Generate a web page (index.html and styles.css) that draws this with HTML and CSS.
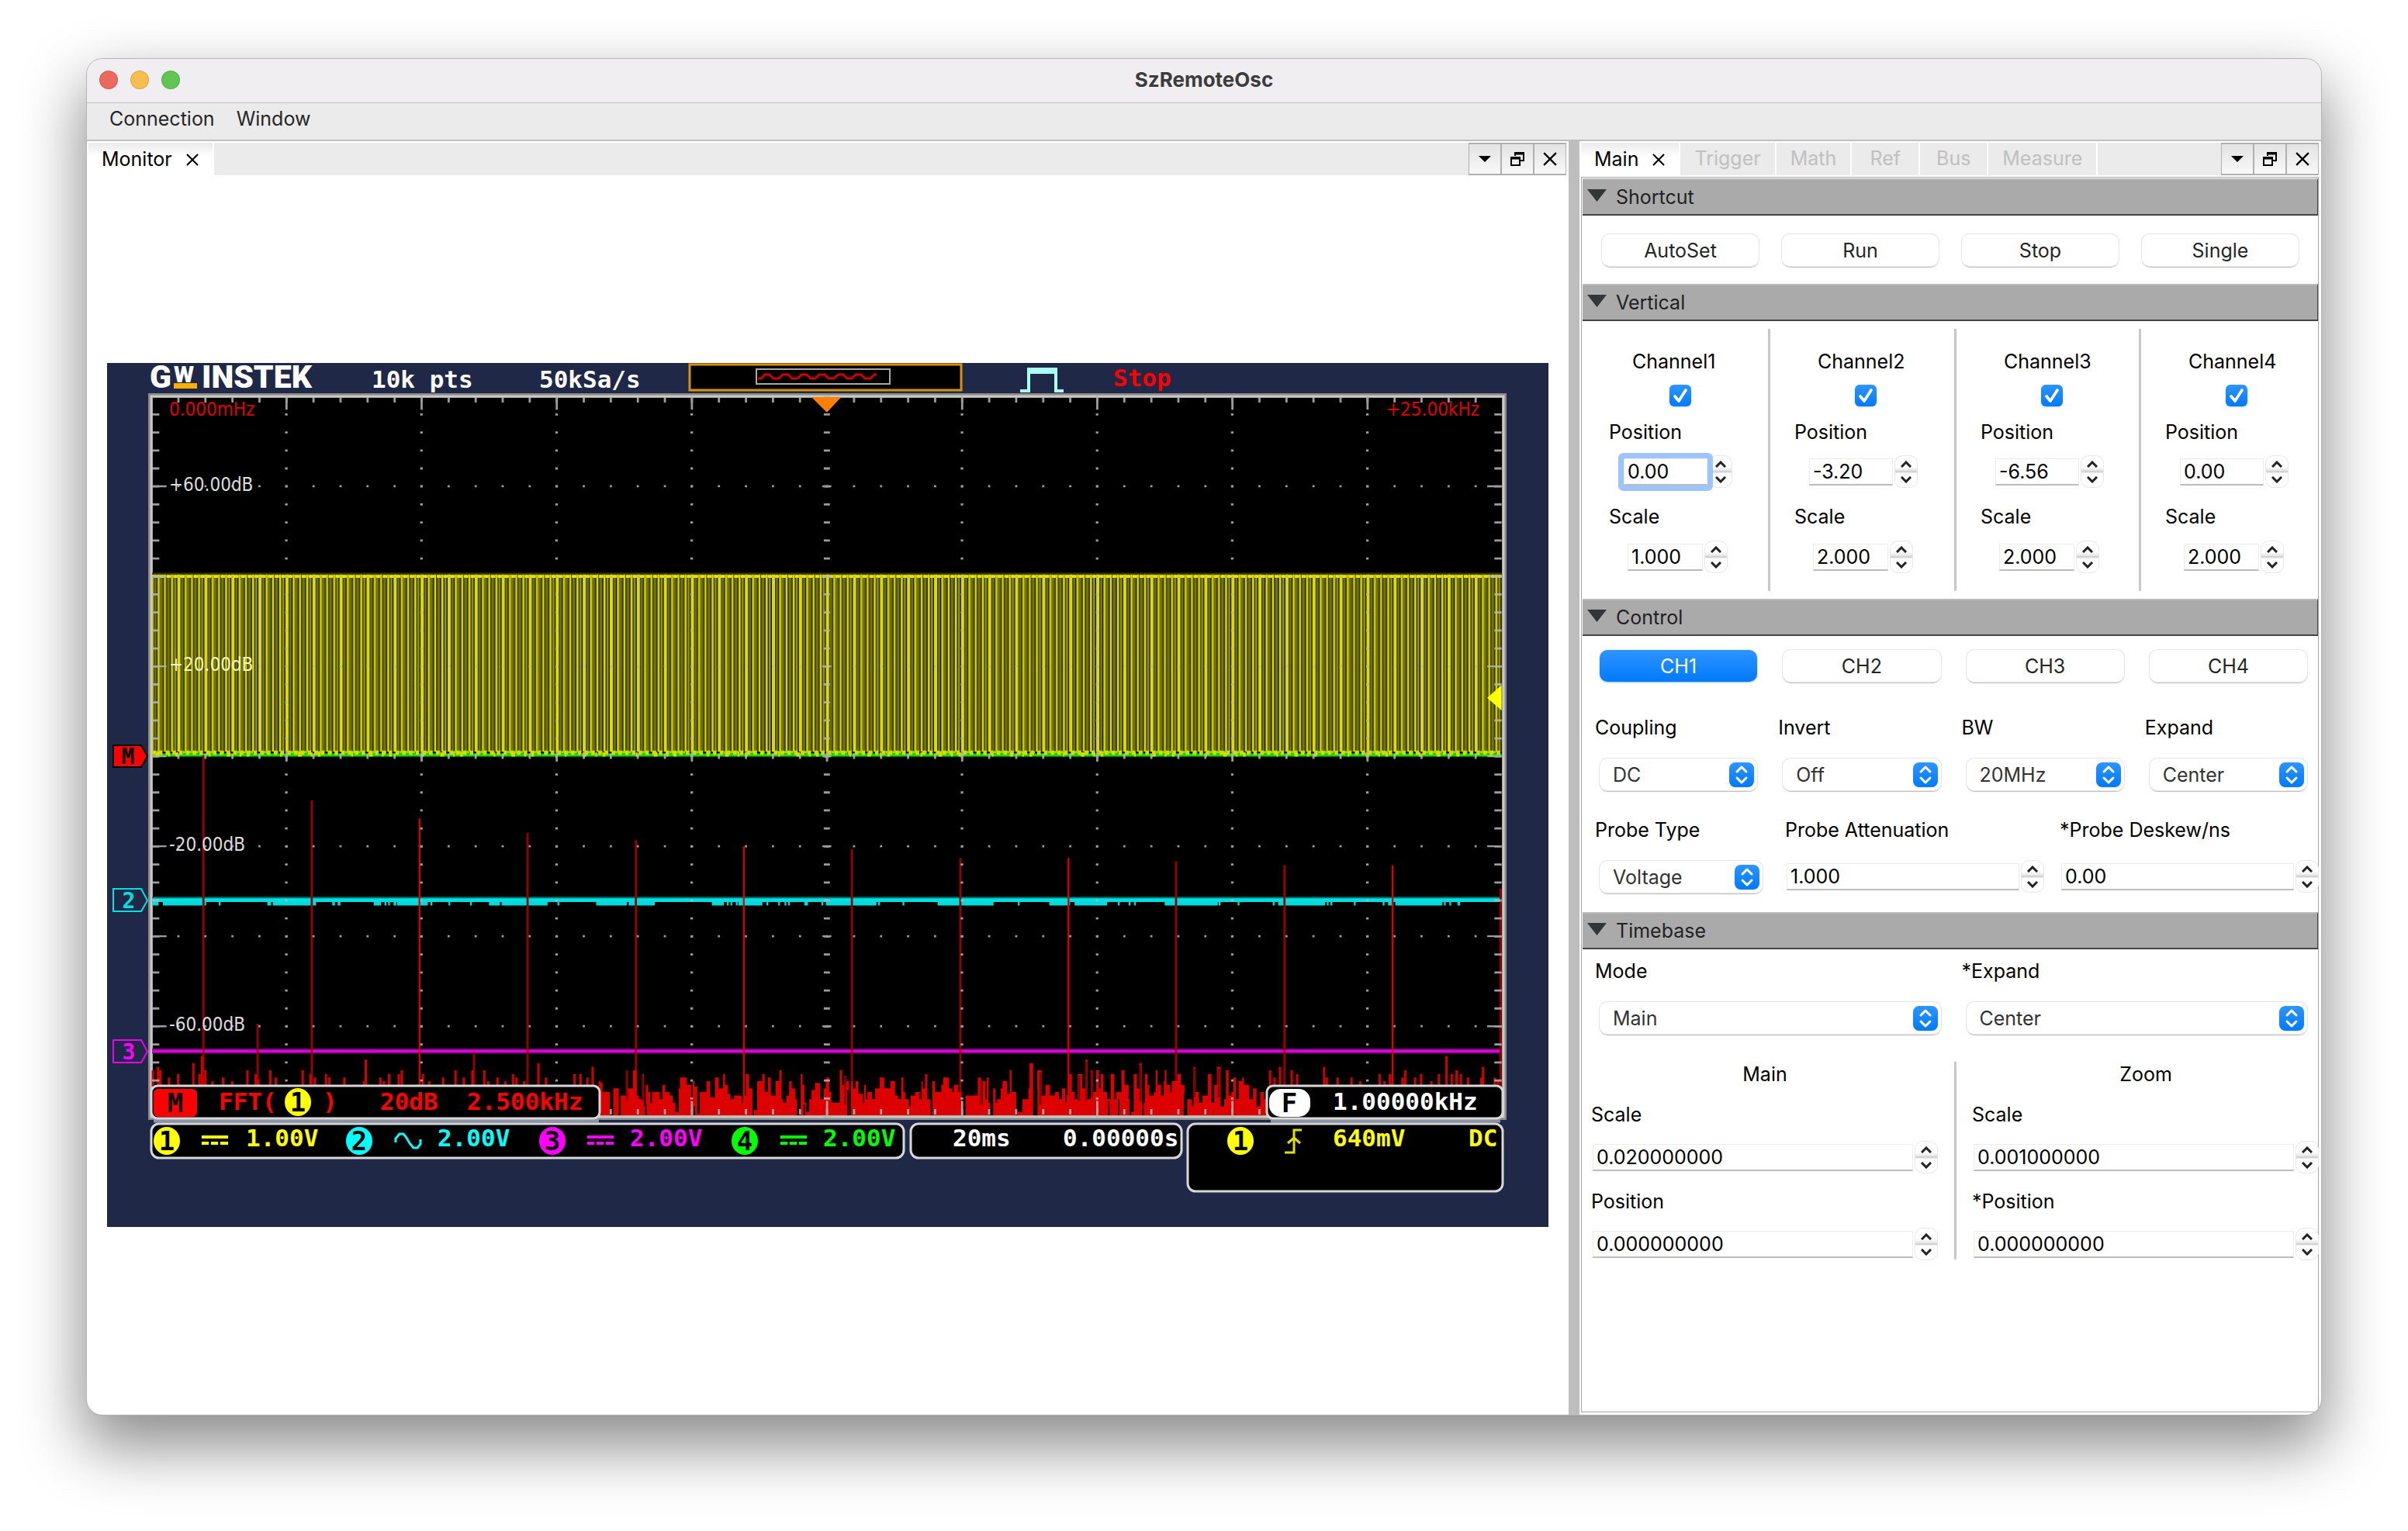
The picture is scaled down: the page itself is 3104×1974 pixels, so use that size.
FILE: index.html
```html
<!DOCTYPE html>
<html lang="en">
<head>
<meta charset="utf-8">
<title>SzRemoteOsc</title>
<link rel="stylesheet" href="styles.css">
</head>
<body>
<svg class="defs" aria-hidden="true">
  <symbol id="i-x" viewBox="0 0 16 16"><path d="M1 1l14 14M15 1L1 15" fill="none" stroke="currentColor" stroke-width="2"/></symbol>
  <symbol id="i-drop" viewBox="0 0 16 16"><path d="M0 4h16L8 12z" fill="currentColor"/></symbol>
  <symbol id="i-float" viewBox="0 0 18 18"><path d="M6 5V1h11v10h-4M6 2.5h11M1 7h11v10H1zM1 8.500h11" fill="none" stroke="currentColor" stroke-width="2"/></symbol>
  <symbol id="i-tri" viewBox="0 0 25 16"><path d="M0 0h25L12.500 16z" fill="#333638"/></symbol>
  <symbol id="i-up" viewBox="0 0 14 9"><path d="M1 8l6-6 6 6" fill="none" stroke="#222" stroke-width="3"/></symbol>
  <symbol id="i-down" viewBox="0 0 14 9"><path d="M1 1l6 6 6-6" fill="none" stroke="#222" stroke-width="3"/></symbol>
  <symbol id="i-pick" viewBox="0 0 32 32"><path d="M10 12l6-6 6 6M10 20l6 6 6-6" fill="none" stroke="#fff" stroke-width="3" stroke-linecap="round" stroke-linejoin="round"/></symbol>
</svg>

<main class="window">
  <header class="titlebar">
    <div class="lights"><button class="light red" aria-label="Close"></button><button class="light amber" aria-label="Minimize"></button><button class="light green" aria-label="Zoom"></button></div>
    <h1>SzRemoteOsc</h1>
  </header>
  <nav class="menubar"><button>Connection</button><button>Window</button></nav>

  <div class="docks">
    <section class="dock monitor">
      <div class="tabbar">
        <button class="tab active">Monitor<svg class="x"><use href="#i-x"/></svg></button>
        <div class="fill"></div>
        <div class="tools"><button aria-label="List"><svg><use href="#i-drop"/></svg></button><button aria-label="Float"><svg class="big"><use href="#i-float"/></svg></button><button aria-label="Close"><svg class="big"><use href="#i-x"/></svg></button></div>
      </div>
      <div class="screen">
        <svg class="scope" viewBox="0 0 1858 1114" role="img" aria-label="Oscilloscope screen">
          <rect width="1858" height="1114" fill="#202847"/>
          <rect x="56" y="42" width="1745" height="931" fill="#000" stroke="#8a8a8a" stroke-width="6"/>
          <rect x="57" y="43" width="1743" height="929" fill="none" stroke="#c8c8c4" stroke-width="3"/>

          <svg width="1858" height="1114" viewBox="0 0 800 480" preserveAspectRatio="none">
            <defs>
              <pattern id="wave" patternUnits="userSpaceOnUse" x="24" y="118" width="15" height="100">
                <rect width="15" height="100" fill="#0c0c00"/>
                <g fill="#dcdc00"><rect width="1.800" height="100"/><rect x="4" width="1.100" height="100"/><rect x="7.500" width="1.200" height="100"/><rect x="11.500" width="1.200" height="100"/></g>
                <g fill="#747400"><rect x="2.200" width="1.200" height="100"/><rect x="5.100" width="1.700" height="100"/><rect x="9.200" width="1.700" height="100"/></g>
                <g fill="#969600"><rect x="13.200" width="1.200" height="100"/></g>
                <g fill="#3c3c00"><rect x="6.800" width=".7" height="100"/><rect x="10.900" width=".6" height="100"/></g>
              </pattern>
            </defs>
            <!-- channel 1 square wave -->
            <rect x="25" y="117" width="749" height="99" fill="url(#wave)"/>
            <path d="M25 117h749" stroke="#3a3a00" stroke-width="1"/>
            <path d="M25.500 118.500H774" stroke="#e6e600" stroke-width="1.600" stroke-dasharray="2.500 1.250"/>
            <path d="M25 217.800H774" stroke="#00e000" stroke-width="1.800"/>
            <path d="M25 216.300H774" stroke="#8ee000" stroke-width="1.400" stroke-dasharray="5 3 2 7 9 4"/>
            <path d="M25 216.500H774" stroke="#dada00" stroke-width="2.400" stroke-dasharray="2 1.750"/>
            <path d="M27 217.500H774" stroke="#dada00" stroke-width="2.400" stroke-dasharray="2 5 1 3 1.500 17 1 9"/>
            <!-- channels 2 and 3 -->
            <path d="M25 298.400H774" stroke="#00e0e0" stroke-width="2.200"/>
            <path d="M25 297H774" stroke="#007070" stroke-width=".9"/>
            <path d="M25 300.300h3.600M31 300.300h24M62 300.300h1M89 300.300h2M92 300.300h24M125 300.300h1.500M128 300.300h1.500M148 300.300h4M154 300.300h1M156 300.300h1M159 300.300h1.500M161 300.300h17M179.500 300.300h1M189.500 300.300h1M201.500 300.300h1M212 300.300h6M219 300.300h25.500M250 300.300h1M271.500 300.300h17M289.500 300.300h14.500M335.700 300.300h6.600M344 300.300h1M346 300.300h1M349 300.300h1M350.500 300.300h13.200M366 300.300h1M372.500 300.300h1M376 300.300h1M378 300.300h1M387 300.300h2M396.500 300.300h1M399 300.300h28M428 300.300h1M441.500 300.300h1M461 300.300h31M505.500 300.300h1M523 300.300h11.500M537 300.300h18M561 300.300h1M567 300.300h1M570 300.300h1M587 300.300h29.500M617 300.300h1M627.500 300.300h1M647 300.300h1M650 300.300h26M677 300.300h1M679 300.300h1M692 300.300h1M708 300.300h1M711 300.300h3M715 300.300h26M742 300.300h1M745 300.300h1M749.500 300.300h1.500" stroke="#00dada" stroke-width="2.200"/>
            <path d="M25 382.300H774" stroke="#8c008c" stroke-width="2.600"/>
            <path d="M25 382.300H774" stroke="#e000e0" stroke-width="1.300"/>
            <!-- spectrum harmonics -->
            <path d="M53.500 418V218M113.600 418V243M233.400 418V261M293.500 418V265M413.400 418V270M473.600 418V275M593.300 418V277M653.500 418V279M773.500 418V292M83.600 418V367M203.600 418V383" stroke="#980000" stroke-width="1.200"/>
            <path d="M173.400 418V253M353.400 418V268.500M533.600 418V275M713.500 418V279" stroke="#e00000" stroke-width="1"/>
            <!-- noise floor -->
            <path d="M25.400 402v-9M28.300 402v-11M29.600 402v-9M34.400 402v-5M39.400 402v-7M47.900 402v-13M51.300 402v-7M52.700 402v-17M54.600 402v-9M58.500 402v-3M64.400 402v-5M69.400 402v-3M77.900 402v-9M82.500 402v-7M84 402v-4M90.600 402v-9M93.600 402v-5M108.600 402v-9M112.900 402v-7M115.400 402v-5M121.500 402v-7M123.400 402v-5M131.700 402v-5M142.600 402v-3M143.600 402v-15M151.700 402v-5M153.700 402v-3M156.500 402v-7M161.900 402v-7M163.600 402v-9M175.300 402v-7M178.800 402v-3M186.500 402v-5M193.400 402v-9M198 402v-5M202.800 402v-9M209.400 402v-9M211.500 402v-3M216.700 402v-5M221 402v-3M225.300 402v-7M227.200 402v-5M231.500 402v-3M239.400 402v-13M243.600 402v-5M259.500 402v-7M262.800 402v-7M266.600 402v-5M269.500 402v-11M273.400 402v-3M645.500 402v-9M648 402v-5M651 402v-11M657.500 402v-9M660.500 402v-7M675.500 402v-11M677 402v-5M683 402v-5M690.700 402v-5M695.500 402v-3M706.300 402v-7M709 402v-3M712 402v-7M719 402v-5M720.500 402v-9M726 402v-5M729.300 402v-7M735 402v-3M739.200 402v-7M743.400 402v-17M746.300 402v-7M749 402v-9M751.400 402v-7M755.400 402v-5M762.700 402v-5M763.700 402v-11M770.200 402v-5M772 402v-3" stroke="#d00000" stroke-width="1.300"/>
            <path fill="#dc0000" d="M273.500 418V400H275V405H279V418H281V403H284V418H285V407H288V393H289V403H291.800V393H293.900V407H295.200V409H297V395H298V413H299V401H300.300V405H301.500V411H302.500V405H306.800V409H308.200V401H309.700V405H312.200V407H314V411H315.500V416H317.300V403H318V397H321.600V401H324.200V418H325V399H326V402H327.600V417H329V405H332.700V399H334.700V408H337.400V397H339.500V403H341.900V395H343V401H344.600V406H346V409H348V407H352.200V411H353V407H354.500V395H356.200V403H358.200V415H360.800V399H363.700V395H365V405H366.700V397H368.400V407H371V399H373.200V393H374.400V409H375.200V411H377V407H378.600V399H380V403H382V409H383V418H385V395H386V401H387V411H388V416H389.700V409H391V404H393V400H395.700V409H397.700V403H399V397H400.800V405H402V411H406.700V393H408V401H409V403H410V399H411.800V418H413V399H414V403H415.500V399H417V406H419.500V411H420.200V401H421.200V409H422V405H424.600V409H426.300V403H428.900V397H431.400V403H434.800V399H437.400V407H439V409H440.800V397H442V405H443V409H445V413H446V407H448.400V405H451V409H452V399H452.700V403H454V395H455.200V409H457V414H457.800V418H458V399H459.500V405H463V401H464V397H467.200V403H469V405H470V401H472.300V405H474.300V418H476.500V407H483.300V397H485V411H486V399H487.600V409H488.300V397H489.300V411H490V418H491.800V403H493V411H494V409H496V403H497V399H499.500V406H501V393H502V405H504.600V416H508V409H511.400V403H512V389H514V418H515.700V407H516.300V393H518.700V407H520.800V401H523.300V407H526V405H528.400V409H530V403H531.800V411H532.500V407H534V395H535.500V405H537V409H538.700V395H541.200V403H543V387H544.200V409H546V393H547V405H549V393H550.500V403H551.500V395H553V405H555V409H557V395H559V409H560V405H563V393H564.700V401H567V409H568V416H569.800V395H571.500V403H573V389H574.300V411H576V395H577.400V401H578.500V407H581V405H582V393H583V401H585V407H586.500V399H587V393H588V401H590V405H591V399H594V395H596V401H598V418H599.500V409H602V413H603V391H604V405H606V411H608V407H611V395H613V411H614.500V401H616V391H618V413H620V409H621V393H622.500V407H624V405H625V397H626.500V409H628V399H630V397H631V401H634V409H636V403H638V413H640V405H642V409H644V418z"/>
            <path stroke="#000" stroke-width=".8" d="M299 418v-6M358.600 418v-4M411.300 418v-14M457.600 418v-8M475 418v-13M490.800 418v-14M516 418v-14M326 418v-5M383.600 418v-9M387 418v-6M568 418v-10M505 418v-5M556 418v-8M561.500 418v-9M575 418v-10M598 418v-12"/>
            <path stroke="#8c0000" stroke-width="1.200" d="M288.500 410v-17M297.500 410v-14M409.700 412v-16M518 412v-18M539.500 410v-14M543.500 410v-22M485.200 412v-14M546.700 408v-14M573.600 410v-20M603.500 408v-16M617 408v-16"/>
            <!-- graticule -->
            <g stroke="#b8b8b8" fill="none" opacity=".85">
              <path d="M99.500 18v401M174.500 18v401M249.500 18v401M324.500 18v401M474.500 18v401M549.500 18v401M624.500 18v401M699.500 18v401" stroke-width="1.400" stroke-dasharray="1.200 8.800"/>
              <path d="M399.500 18v401" stroke-width="3.400" stroke-dasharray="1.200 8.800"/>
              <path d="M399.500 68v351" stroke-width="5" stroke-dasharray="1 49"/>
              <path d="M39 68.500H773M39 118.500H773M39 168.500H773M39 268.500H773M39 318.500H773M39 368.500H773" stroke-width="1.200" stroke-dasharray="1.200 13.800"/>
              <path d="M39 218.500H773" stroke-width="3" stroke-dasharray="1.200 13.800"/>
              <path d="M99 218.500H773" stroke-width="6" stroke-dasharray="1.200 73.800"/>
              <path d="M39 20.500H773M39 416H773" stroke-width="3" stroke-dasharray="1.200 13.800"/>
              <path d="M99 22H773M99 414H773" stroke-width="8" stroke-dasharray="1.200 73.800"/>
              <path d="M27 28v389M772 28v389" stroke-width="4" stroke-dasharray="1.200 8.800"/>
              <path d="M29 68v349M770 68v349" stroke-width="8" stroke-dasharray="1 49"/>
            </g>
            <path d="M391 19h16.500l-8 8.500z" fill="#ff8000"/>
            <path d="M774 179v14l-8-7z" fill="#ff0"/>
          </svg>

          <!-- maker's name -->
          <g fill="#fff" class="logo">
            <text x="55" y="32" class="logo-l">G</text><text x="86" y="25" class="logo-s">W</text><text x="122" y="32" class="logo-l">INSTEK</text>
          </g>
          <rect x="86" y="26" width="30" height="7" fill="#ffb000"/>

          <g class="mono">
            <text x="341" y="32" fill="#fff">10k pts</text>
            <text x="557" y="32" fill="#fff">50kSa/s</text>
            <text x="1297" y="30" fill="#f00">Stop</text>
          </g>
          <rect x="751" y="2" width="350" height="33" fill="#000" stroke="#d89400" stroke-width="3"/>
          <rect x="837" y="8" width="172" height="19" fill="none" stroke="#a8a8a8" stroke-width="2"/>
          <path d="M839 20h4l5-5h6l5 5h7l5-5h7l5 5h7l5-5h7l5 5h6l5-5h7l5 5h7l5-5h7l5 5h6l5-5h7l5 5h7l5-5h3" fill="none" stroke="#d00000" stroke-width="3"/>
          <path d="M1177 36h11V8h3v4h4V8h4v4h4V8h4v4h4V8h4v4h4V8h4v28h10" fill="none" stroke="#aaffee" stroke-width="4"/>

          <g class="fine">
            <text x="80" y="68" fill="#e00000">0.000mHz</text>
            <text x="1649" y="68" fill="#e00000">+25.00kHz</text>
            <text x="80" y="165" fill="#dcdcdc">+60.00dB</text>
            <text x="80" y="397" fill="#f4f4c0">+20.00dB</text>
            <text x="80" y="629" fill="#dcdcdc">-20.00dB</text>
            <text x="80" y="861" fill="#dcdcdc">-60.00dB</text>
          </g>

          <!-- ground markers -->
          <path d="M8 493h36l8 14-8 14H8z" fill="#f00" stroke="#000" stroke-width="2"/>
          <path d="M8 678h36l8 15-8 14H8z" fill="none" stroke="#00e0e0" stroke-width="2"/>
          <path d="M8 873h36l8 15-8 14H8z" fill="none" stroke="#e0e" stroke-width="2"/>
          <g class="tag"><text x="27" y="517" fill="#000">M</text><text x="28" y="703" fill="#00e0e0">2</text><text x="28" y="898" fill="#f0f">3</text></g>

          <!-- read-out boxes -->
          <path d="M60 977h574M1500 977h296" stroke="#8d93a5" stroke-width="5"/>
          <g fill="#000" stroke="#d8d8d8" stroke-width="3">
            <rect x="57" y="932" width="578" height="42" rx="8"/>
            <rect x="1495" y="932" width="304" height="42" rx="8"/>
            <rect x="57" y="981" width="970" height="44" rx="10"/>
            <rect x="1036" y="981" width="349" height="44" rx="10"/>
            <rect x="1393" y="981" width="406" height="87" rx="10"/>
          </g>
          <rect x="60" y="936" width="56" height="36" rx="6" fill="#f00"/>
          <rect x="1498" y="936" width="53" height="36" rx="15" fill="#fff"/>
          <ellipse cx="246" cy="953" rx="17" ry="18" fill="#ff0"/>
          <ellipse cx="77" cy="1003" rx="17" ry="18" fill="#ff0"/>
          <ellipse cx="325" cy="1003" rx="17" ry="18" fill="#0ff"/>
          <ellipse cx="574" cy="1003" rx="17" ry="18" fill="#f0f"/>
          <ellipse cx="822" cy="1003" rx="17" ry="18" fill="#0f0"/>
          <ellipse cx="1461" cy="1003" rx="17" ry="18" fill="#ff0"/>
          <g fill="none" stroke-width="4">
            <path d="M122 998h34M122 1006h9m3 0h9m3 0h10" stroke="#ff0"/>
            <path d="M372 1005v-5l5-6h5l4 5 4 7 5 6h5l4-5v-6" stroke="#0ff" stroke-width="3"/>
            <path d="M619 998h34M619 1006h9m3 0h9m3 0h10" stroke="#f0f"/>
            <path d="M868 998h34M868 1006h9m3 0h9m3 0h10" stroke="#0f0"/>
            <path d="M1518 1018h12v-29h10M1522 1006l8-7 8 7" stroke="#e0e000" stroke-width="3"/>
          </g>
          <g class="mono">
            <g fill="#f00"><text x="144" y="963">FFT(</text><text x="278" y="963">)</text><text x="352" y="963">20dB</text><text x="464" y="963">2.500kHz</text></g>
            <text x="1580" y="963" fill="#fff">1.00000kHz</text>
            <text x="179" y="1010" fill="#ff0">1.00V</text>
            <text x="426" y="1010" fill="#0ff">2.00V</text>
            <text x="674" y="1010" fill="#f0f">2.00V</text>
            <text x="923" y="1010" fill="#0f0">2.00V</text>
            <text x="1090" y="1010" fill="#fff">20ms</text>
            <text x="1232" y="1010" fill="#fff">0.00000s</text>
            <text x="1580" y="1010" fill="#ff0">640mV</text>
            <text x="1755" y="1010" fill="#ff0">DC</text>
          </g>
          <g class="tag big">
            <text x="88" y="966">M</text><text x="1524" y="966">F</text><text x="246" y="965">1</text><text x="77" y="1015">1</text><text x="325" y="1015">2</text><text x="574" y="1015">3</text><text x="822" y="1015">4</text><text x="1461" y="1015">1</text>
          </g>
        </svg>
      </div>
    </section>

    <section class="dock controls">
      <div class="tabbar">
        <button class="tab active">Main<svg class="x"><use href="#i-x"/></svg></button>
        <button class="tab">Trigger</button><button class="tab">Math</button><button class="tab short">Ref</button><button class="tab short">Bus</button><button class="tab">Measure</button>
        <div class="fill"></div>
        <div class="tools"><button aria-label="List"><svg><use href="#i-drop"/></svg></button><button aria-label="Float"><svg class="big"><use href="#i-float"/></svg></button><button aria-label="Close"><svg class="big"><use href="#i-x"/></svg></button></div>
      </div>
      <div class="panel">
        <details open>
          <summary><svg><use href="#i-tri"/></svg>Shortcut</summary>
          <div class="shortcut"><button class="btn">AutoSet</button><button class="btn">Run</button><button class="btn">Stop</button><button class="btn">Single</button></div>
        </details>

        <details open>
          <summary><svg><use href="#i-tri"/></svg>Vertical</summary>
          <div class="vertical">
            <div class="channel">
              <label class="name" for="c1">Channel1</label><input type="checkbox" id="c1" checked>
              <label for="p1">Position</label>
              <div class="spin pos focus"><input type="text" id="p1" value="0.00"><span class="step"><button aria-label="Up"><svg><use href="#i-up"/></svg></button><button aria-label="Down"><svg><use href="#i-down"/></svg></button></span></div>
              <label for="s1">Scale</label>
              <div class="spin scl"><input type="text" id="s1" value="1.000"><span class="step"><button aria-label="Up"><svg><use href="#i-up"/></svg></button><button aria-label="Down"><svg><use href="#i-down"/></svg></button></span></div>
            </div>
            <div class="channel">
              <label class="name" for="c2">Channel2</label><input type="checkbox" id="c2" checked>
              <label for="p2">Position</label>
              <div class="spin pos"><input type="text" id="p2" value="-3.20"><span class="step"><button aria-label="Up"><svg><use href="#i-up"/></svg></button><button aria-label="Down"><svg><use href="#i-down"/></svg></button></span></div>
              <label for="s2">Scale</label>
              <div class="spin scl"><input type="text" id="s2" value="2.000"><span class="step"><button aria-label="Up"><svg><use href="#i-up"/></svg></button><button aria-label="Down"><svg><use href="#i-down"/></svg></button></span></div>
            </div>
            <div class="channel">
              <label class="name" for="c3">Channel3</label><input type="checkbox" id="c3" checked>
              <label for="p3">Position</label>
              <div class="spin pos"><input type="text" id="p3" value="-6.56"><span class="step"><button aria-label="Up"><svg><use href="#i-up"/></svg></button><button aria-label="Down"><svg><use href="#i-down"/></svg></button></span></div>
              <label for="s3">Scale</label>
              <div class="spin scl"><input type="text" id="s3" value="2.000"><span class="step"><button aria-label="Up"><svg><use href="#i-up"/></svg></button><button aria-label="Down"><svg><use href="#i-down"/></svg></button></span></div>
            </div>
            <div class="channel">
              <label class="name" for="c4">Channel4</label><input type="checkbox" id="c4" checked>
              <label for="p4">Position</label>
              <div class="spin pos"><input type="text" id="p4" value="0.00"><span class="step"><button aria-label="Up"><svg><use href="#i-up"/></svg></button><button aria-label="Down"><svg><use href="#i-down"/></svg></button></span></div>
              <label for="s4">Scale</label>
              <div class="spin scl"><input type="text" id="s4" value="2.000"><span class="step"><button aria-label="Up"><svg><use href="#i-up"/></svg></button><button aria-label="Down"><svg><use href="#i-down"/></svg></button></span></div>
            </div>
          </div>
        </details>

        <details open>
          <summary><svg><use href="#i-tri"/></svg>Control</summary>
          <div class="control">
            <div class="quad"><button class="btn on">CH1</button><button class="btn">CH2</button><button class="btn">CH3</button><button class="btn">CH4</button></div>
            <div class="quad fields">
              <div class="field"><label for="coupling">Coupling</label><span class="pick"><select id="coupling"><option>DC</option></select><svg><use href="#i-pick"/></svg></span></div>
              <div class="field"><label for="invert">Invert</label><span class="pick"><select id="invert"><option>Off</option></select><svg><use href="#i-pick"/></svg></span></div>
              <div class="field"><label for="bw">BW</label><span class="pick"><select id="bw"><option>20MHz</option></select><svg><use href="#i-pick"/></svg></span></div>
              <div class="field"><label for="expand">Expand</label><span class="pick"><select id="expand"><option>Center</option></select><svg><use href="#i-pick"/></svg></span></div>
            </div>
            <div class="probe">
              <div class="field type"><label for="ptype">Probe Type</label><span class="pick"><select id="ptype"><option>Voltage</option></select><svg><use href="#i-pick"/></svg></span></div>
              <div class="field num"><label for="patt">Probe Attenuation</label><div class="spin"><input type="text" id="patt" value="1.000"><span class="step"><button aria-label="Up"><svg><use href="#i-up"/></svg></button><button aria-label="Down"><svg><use href="#i-down"/></svg></button></span></div></div>
              <div class="field num"><label for="pdes">*Probe Deskew/ns</label><div class="spin"><input type="text" id="pdes" value="0.00"><span class="step"><button aria-label="Up"><svg><use href="#i-up"/></svg></button><button aria-label="Down"><svg><use href="#i-down"/></svg></button></span></div></div>
            </div>
          </div>
        </details>

        <details open>
          <summary><svg><use href="#i-tri"/></svg>Timebase</summary>
          <div class="timebase">
            <div class="pair">
              <div class="field"><label for="mode">Mode</label><span class="pick"><select id="mode"><option>Main</option></select><svg><use href="#i-pick"/></svg></span></div>
              <div class="field"><label for="texp">*Expand</label><span class="pick"><select id="texp"><option>Center</option></select><svg><use href="#i-pick"/></svg></span></div>
            </div>
            <div class="split">
              <div class="base">
                <h2>Main</h2>
                <label for="ms">Scale</label><div class="spin"><input type="text" id="ms" value="0.020000000"><span class="step"><button aria-label="Up"><svg><use href="#i-up"/></svg></button><button aria-label="Down"><svg><use href="#i-down"/></svg></button></span></div>
                <label for="mp">Position</label><div class="spin"><input type="text" id="mp" value="0.000000000"><span class="step"><button aria-label="Up"><svg><use href="#i-up"/></svg></button><button aria-label="Down"><svg><use href="#i-down"/></svg></button></span></div>
              </div>
              <div class="base">
                <h2>Zoom</h2>
                <label for="zs">Scale</label><div class="spin"><input type="text" id="zs" value="0.001000000"><span class="step"><button aria-label="Up"><svg><use href="#i-up"/></svg></button><button aria-label="Down"><svg><use href="#i-down"/></svg></button></span></div>
                <label for="zp">*Position</label><div class="spin"><input type="text" id="zp" value="0.000000000"><span class="step"><button aria-label="Up"><svg><use href="#i-up"/></svg></button><button aria-label="Down"><svg><use href="#i-down"/></svg></button></span></div>
              </div>
            </div>
          </div>
        </details>
      </div>
    </section>
  </div>
</main>
</body>
</html>
```
FILE: styles.css
```css
* { box-sizing: border-box; }

body {
  margin: 0;
  min-height: 100vh;
  padding: 76px 112px 150px;
  display: flex;
  background: #fff;
  color: #000;
  font: 25px/32px Inter, "Liberation Sans", sans-serif;
}

button, input, select { font: inherit; color: inherit; margin: 0; }
button { border: 0; padding: 0; background: none; }
h1, h2 { margin: 0; font: inherit; }
label { display: block; }
.defs { position: absolute; width: 0; height: 0; }

/* window frame */
.window {
  flex: 1;
  min-width: 0;
  display: flex;
  flex-direction: column;
  border-radius: 20px;
  overflow: hidden;
  background: #fff;
  box-shadow: 0 0 0 1px #b4b4b4, 0 36px 80px 6px rgba(0, 0, 0, .45);
}

.titlebar {
  display: grid;
  grid-template-columns: 1fr auto 1fr;
  align-items: center;
  height: 57px;
  padding: 0 16px 2px;
  background: #f0eef0;
  border-bottom: 1px solid #c4c4c4;
}
.titlebar h1 { font-size: 26px; font-weight: 700; color: #3c3c3c; }
.lights { display: flex; gap: 16px; }
.light { width: 24px; height: 24px; border-radius: 50%; border: 1px solid rgba(0, 0, 0, .12); }
.red { background: #ec695e; }
.amber { background: #f5bf4f; }
.green { background: #61c554; }

.menubar {
  display: flex;
  gap: 28px;
  height: 49px;
  padding: 4px 29px 11px;
  background: #ebebeb;
  border-bottom: 2px solid #bebebe;
  color: #262626;
}

/* docks */
.docks {
  flex: 1;
  display: grid;
  grid-template-columns: 1910fr 970fr;
}
.dock { display: flex; flex-direction: column; min-width: 0; padding-top: 2px; }
.controls { border-left: 14px solid #bebebe; padding: 2px 3px 3px 2px; }

.tabbar { display: flex; gap: 2px; height: 42px; }
.monitor .tabbar { padding: 0 3px 0 2px; }
.tab {
  display: flex;
  align-items: center;
  justify-content: center;
  gap: 18px;
  padding: 0 18px 2px;
  background: #ebebeb;
  color: #c0c0c0;
}
.tab.short { min-width: 86px; }
.tab.active { padding: 0 18px 1px 17px; background: linear-gradient(#ebebeb, #fff 45%); color: #000; }
.tab .x { width: 16px; height: 16px; margin-top: 3px; }
.fill { flex: 1; background: #ebebeb; margin-right: -2px; }
.tools { display: flex; }
.tools button {
  display: grid;
  place-items: center;
  width: 42px;
  border: 2px solid #b0b0b0;
  border-left-width: 1px;
  border-right-width: 1px;
  background: linear-gradient(#e4e4e4, #f8f8f8);
}
.tools svg { width: 16px; height: 16px; }
.tools .big { width: 18px; height: 18px; }

.screen { flex: 1; display: grid; align-items: center; padding: 0 26px; }
.scope { display: block; width: 100%; overflow: visible; }
.logo { font-family: Roboto, sans-serif; font-weight: 900; }
.logo-l { font-size: 41px; }
.logo-s { font-size: 30px; }
.mono { font: 700 31px "DejaVu Sans Mono", monospace; }
.fine { font: 24px "DejaVu Sans Condensed", sans-serif; }
.tag { font: 700 28px "DejaVu Sans Mono", monospace; text-anchor: middle; }
.tag.big { font-size: 34px; }

/* settings panel */
.panel {
  flex: 1;
  margin-top: 2px;
  padding: 1px 0 0 1px;
  border: 1px solid #a6a6a6;
}
summary {
  display: flex;
  align-items: center;
  gap: 12px;
  height: 48px;
  padding-left: 6px;
  list-style: none;
  background: #aaa;
  border-top: 2px solid #bbb;
  border-bottom: 2px solid #444;
  border-right: 1px solid #444;
  color: #222;
}
summary svg { width: 25px; height: 16px; margin-bottom: 4px; }

.btn {
  height: 41px;
  border-radius: 10px;
  background: #fff;
  color: #262626;
  box-shadow: 0 0 0 1px #e6e6e6, 0 2px 1px #bdbdbd;
}
.btn.on {
  background: linear-gradient(#2f94ff, #007aff);
  color: #fff;
  box-shadow: 0 1px 2px #8fbdf0;
}
.shortcut {
  display: grid;
  grid-template-columns: repeat(4, 1fr);
  gap: 30px;
  padding: 24px 25px 23px;
}

.vertical {
  display: grid;
  grid-template-columns: 239fr 240fr 238fr 231fr;
  padding: 10px 0;
}
.channel { border-left: 3px solid #c8c8c8; padding: 26px 0 24px 31px; }
.channel:first-child { border-left-color: transparent; }
.channel .name { margin-left: 30px; }
.channel input[type="checkbox"] {
  display: block;
  appearance: none;
  width: 28px;
  height: 28px;
  margin: 14px 0 17px 78px;
  border-radius: 6px;
  background: url("data:image/svg+xml,%3Csvg xmlns='http://www.w3.org/2000/svg' viewBox='0 0 28 28'%3E%3Cpath d='M7 15l5 6 9-14' fill='none' stroke='white' stroke-width='3.6' stroke-linecap='round' stroke-linejoin='round'/%3E%3C/svg%3E"), linear-gradient(#2f94ff, #007aff);
  box-shadow: 0 1px 2px #b8d4f4;
}
.pos { width: 139px; margin: 15px 0 22px 19px; }
.scl { width: 128px; margin: 16px 0 0 24px; }

/* number field with up/down arrows */
.spin { display: flex; align-items: center; gap: 3px; height: 40px; }
.spin input {
  flex: 1;
  min-width: 0;
  height: 35px;
  padding: 0 0 0 4px;
  border: 1px solid #ececec;
  border-bottom: 2px solid #bcbcbc;
  background: #fff;
  outline: 0;
}
.focus input { border-radius: 2px; box-shadow: 0 0 0 7px #9dc4fb; position: relative; }
.step {
  display: grid;
  grid-template-rows: 1fr 1fr;
  width: 28px;
  height: 40px;
  border-radius: 10px;
  background: linear-gradient(#fff 35%, #e4e4e4 47%, #c8c8c8 50%, #fff 56%);
  box-shadow: 0 0 0 1px #e8e8e8;
}
.step button { display: grid; place-items: center; }
.step svg { width: 14px; height: 9px; }

/* drop-downs */
.pick { display: grid; align-items: center; }
.pick select, .pick svg { grid-area: 1 / 1; }
.pick select {
  appearance: none;
  width: 100%;
  height: 41px;
  margin-bottom: 1px;
  padding: 0 40px 0 17px;
  border: 0;
  border-radius: 10px;
  background: #fff;
  color: #333;
  box-shadow: 0 0 0 1px #e6e6e6, 0 2px 1px #bdbdbd;
}
.pick svg {
  justify-self: end;
  width: 32px;
  height: 32px;
  margin-right: 4px;
  border-radius: 8px;
  background: linear-gradient(#2f94ff, #007aff);
  pointer-events: none;
}

.field { display: flex; flex-direction: column; gap: 24px; min-width: 0; }
.field label { margin-left: -6px; white-space: nowrap; }
.num label { margin-left: -2px; }
.type .pick { margin-right: 8px; }

.control { padding: 18px 0 24px 22px; }
.quad { display: grid; grid-template-columns: repeat(4, 1fr); gap: 33px; padding-right: 14px; }
.fields { margin-top: 43px; }
.probe {
  display: grid;
  grid-template-columns: 218px 1fr 1fr;
  gap: 23px;
  margin-top: 34px;
}

.pair {
  display: grid;
  grid-template-columns: 1fr 1fr;
  gap: 33px;
  padding: 12px 14px 35px 22px;
}
.split { display: grid; grid-template-columns: 479fr 469fr; }
.base { padding: 0 22px 0 13px; }
.base + .base { padding: 0 0 0 22px; border-left: 3px solid #c8c8c8; }
.base h2 { text-align: center; margin-bottom: 20px; }
.base label { margin: 0 0 19px -2px; }
.base .spin + label { margin-top: 21px; }
```
